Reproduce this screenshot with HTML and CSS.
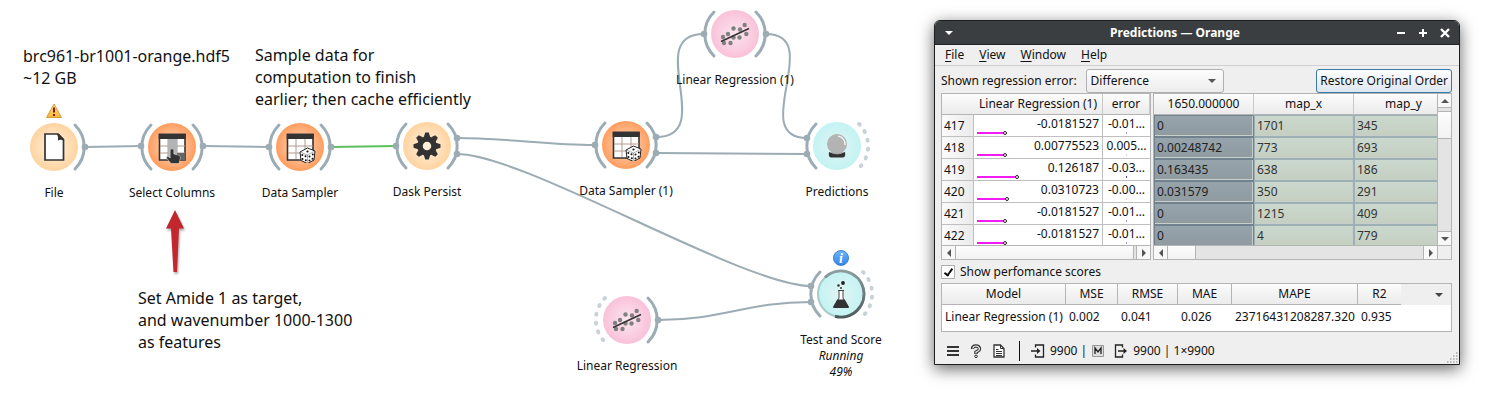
FILE: index.html
```html
<!DOCTYPE html>
<html lang="en">
<head>
<meta charset="utf-8">
<title>Predictions — Orange</title>
<link rel="stylesheet" href="styles.css">
</head>
<body>
<svg class="defs" aria-hidden="true">
  <defs>
    <radialGradient id="g-data"><stop offset="0" stop-color="#fff3e2"/><stop offset="1" stop-color="#ffd39f"/></radialGradient>
    <radialGradient id="g-transform"><stop offset="0" stop-color="#ffdcc6"/><stop offset="1" stop-color="#ff9d5e"/></radialGradient>
    <radialGradient id="g-model"><stop offset="0" stop-color="#fbe6ef"/><stop offset="1" stop-color="#fac1d9"/></radialGradient>
    <radialGradient id="g-evaluate"><stop offset="0" stop-color="#e2f4f3"/><stop offset="1" stop-color="#c3f3f3"/></radialGradient>
    <linearGradient id="g-warn" x2="0" y2="1"><stop offset="0" stop-color="#ffe38a"/><stop offset="1" stop-color="#f5b53a"/></linearGradient>
    <linearGradient id="g-info" x2="0" y2="1"><stop offset="0" stop-color="#6db5fa"/><stop offset="1" stop-color="#2f86ea"/></linearGradient>
    <linearGradient id="g-progress" x2="0" y2="1"><stop offset="0" stop-color="#8b9d9f"/><stop offset="1" stop-color="#4e5b5d"/></linearGradient>
    <symbol id="arc-in" viewBox="-40 -32 80 64"><path class="arc" d="M-21-22A31 31 0 0 0-21 22"/></symbol>
    <symbol id="arc-out" viewBox="-40 -32 80 64"><path class="arc" d="M21-22A31 31 0 0 1 21 22"/></symbol>
    <symbol id="arc-in-off" viewBox="-40 -32 80 64"><path class="arc arc-off" d="M-22-22A31 31 0 0 0-22 22"/></symbol>
    <symbol id="arc-out-off" viewBox="-40 -32 80 64"><path class="arc arc-off" d="M22-22A31 31 0 0 1 22 22"/></symbol>
    <symbol id="i-table" viewBox="-16 -16 32 32">
      <path fill="#fff" stroke="#333" stroke-width="1.6" d="M-12.5-12.5h25.500v25.500h-25.500z"/>
      <path fill="none" stroke="#b49a8e" d="M-12-1h25M-12 6h25M-4-8v20M5-8v20"/>
      <path fill="#333" d="M-13.300-13.300h27v5.300h-27z"/>
    </symbol>
    <symbol id="i-dice" viewBox="-16 -16 32 32">
      <path fill="#fff" stroke="#222" stroke-width="1" stroke-linejoin="round" d="M0 5L7.500 1l7.500 3-1 9-6.500 3.500L1 13.500z"/>
      <path fill="none" stroke="#777" stroke-width=".6" d="M0 5l7.500 3L15 4M7.500 8v8"/>
      <g fill="#111"><circle cx="7.500" cy="4.500" r="1.100"/><circle cx="2.300" cy="8" r="1"/><circle cx="5.500" cy="9.300" r="1"/><circle cx="2.500" cy="12" r="1"/><circle cx="5.800" cy="13.300" r="1"/><circle cx="9.500" cy="9.500" r="1"/><circle cx="12.800" cy="7.500" r="1"/><circle cx="9.500" cy="13.500" r="1"/><circle cx="12.500" cy="11.800" r="1"/></g>
    </symbol>
    <symbol id="i-scatter" viewBox="-16 -16 32 32">
      <g fill="#808080"><circle cx="-12" cy="3" r="2.200"/><circle cx="-11" cy="9" r="2.200"/><circle cx="-7" cy="0" r="2.200"/><circle cx="-4.500" cy="9" r="2.200"/><circle cx="-1.500" cy="-5.500" r="2.200"/><circle cx="-1.500" cy="3.500" r="2.200"/><circle cx="5" cy="-4.500" r="2.200"/><circle cx="4.500" cy="3.500" r="2.200"/><circle cx="9.700" cy="-9" r="2.200"/><circle cx="11.300" cy="0" r="2.200"/></g>
      <path stroke="#333" stroke-width="1.500" d="M-14 7.500L14-5.500"/>
    </symbol>
  </defs>
</svg>
<main class="desktop">
  <section class="canvas" aria-label="Workflow">
    <svg class="links" viewBox="0 0 934 407" aria-hidden="true">
      <path d="M85 147L142 146"/>
      <path d="M203 146L269 147"/>
      <path class="active" d="M331 147L396 146"/>
      <path d="M457 138C503 138 549 145 595 145"/>
      <path d="M457 154C525 154 743 286 811 286"/>
      <path d="M656 137C718 137 642 34 704 34"/>
      <path d="M766 34C826 34 747 138 807 138"/>
      <path d="M656 153L807 154"/>
      <path d="M658 320C723 320 746 302 811 302"/>
    </svg>
    <p class="note note-file">brc961-br1001-orange.hdf5<br>~12 GB</p>
    <p class="note note-sample">Sample data for<br>computation to finish<br>earlier; then cache efficiently</p>
    <p class="note note-target">Set Amide 1 as target,<br>and wavenumber 1000-1300<br>as features</p>
    <svg class="arrow" viewBox="0 0 24 68" aria-hidden="true"><path fill="#c1272d" d="M11 2l9 18.500h-5L13 64H9.500L7 20.500H2z"/></svg>

    <div class="node node-file">
      <svg class="shape" viewBox="-40 -32 80 64">
        <circle r="24" fill="url(#g-data)"/>
        <use href="#arc-out" x="-40" y="-32" width="80" height="64"/>
        <circle class="port" cx="31" r="3.300"/>
        <path fill="#fff" stroke="#333" stroke-width="1.700" d="M-9-13H4l5.500 5.500V13H-9z"/><path fill="#333" d="M3-13h2l5 5v2q-3-2-6-.5.500-3.500-1-6.500z"/>
        <path fill="url(#g-warn)" stroke="#d99b3c" stroke-linejoin="round" d="M0-43L7.500-29.500h-15z"/><path stroke="#8c1616" stroke-width="2" d="M0-39.500v5M0-33v2"/>
      </svg>
      <span class="label">File</span>
    </div>
    <div class="node node-select">
      <svg class="shape" viewBox="-40 -32 80 64">
        <circle r="24" fill="url(#g-transform)"/>
        <use href="#arc-in" x="-40" y="-32" width="80" height="64"/><use href="#arc-out" x="-40" y="-32" width="80" height="64"/>
        <circle class="port" cx="-31" cy="-1" r="3.300"/><circle class="port" cx="31" cy="-1" r="3.300"/>
        <use href="#i-table" x="-16" y="-16" width="32" height="32"/>
        <path fill="#b3b3b3" d="M-4-8h9v21h-9z"/><path fill="#666" d="M5 6h8v7H5z"/>
        <path fill="#333" stroke="#fff" stroke-width=".4" d="M-1.800 3q1.800-2.600 3.600 0v4l5.200 1.200q1.500.500 1.300 3L7 16.500H-1L-5.500 11q-.5-2 1.500-1.500l2.200 1.500z"/>
      </svg>
      <span class="label">Select Columns</span>
    </div>
    <div class="node node-sampler">
      <svg class="shape" viewBox="-40 -32 80 64">
        <circle r="24" fill="url(#g-transform)"/>
        <use href="#arc-in" x="-40" y="-32" width="80" height="64"/><use href="#arc-out" x="-40" y="-32" width="80" height="64"/>
        <circle class="port" cx="-31" r="3.300"/><circle class="port" cx="31" r="3.300"/>
        <use href="#i-table" x="-16" y="-16" width="32" height="32"/><use href="#i-dice" x="-16" y="-16" width="32" height="32"/>
      </svg>
      <span class="label">Data Sampler</span>
    </div>
    <div class="node node-dask">
      <svg class="shape" viewBox="-40 -32 80 64">
        <circle r="24" fill="url(#g-data)"/>
        <use href="#arc-in" x="-40" y="-32" width="80" height="64"/><use href="#arc-out" x="-40" y="-32" width="80" height="64"/>
        <circle class="port" cx="-31" r="3.300"/><circle class="port" cx="30" cy="-8" r="3.300"/><circle class="port" cx="30" cy="8" r="3.300"/>
        <circle r="7" fill="none" stroke="#333" stroke-width="5.500"/>
        <g fill="#333"><path id="tooth" d="M-3.200-9l1.400-4.500h3.600L3.200-9z"/><use href="#tooth" transform="rotate(45)"/><use href="#tooth" transform="rotate(90)"/><use href="#tooth" transform="rotate(135)"/><use href="#tooth" transform="rotate(180)"/><use href="#tooth" transform="rotate(225)"/><use href="#tooth" transform="rotate(270)"/><use href="#tooth" transform="rotate(315)"/></g>
      </svg>
      <span class="label">Dask Persist</span>
    </div>
    <div class="node node-sampler1">
      <svg class="shape" viewBox="-40 -32 80 64">
        <circle r="24" fill="url(#g-transform)"/>
        <use href="#arc-in" x="-40" y="-32" width="80" height="64"/><use href="#arc-out" x="-40" y="-32" width="80" height="64"/>
        <circle class="port" cx="-31" r="3.300"/><circle class="port" cx="30" cy="-8" r="3.300"/><circle class="port" cx="30" cy="8" r="3.300"/>
        <use href="#i-table" x="-16" y="-16" width="32" height="32"/><use href="#i-dice" x="-16" y="-16" width="32" height="32"/>
      </svg>
      <span class="label">Data Sampler (1)</span>
    </div>
    <div class="node node-linreg1">
      <svg class="shape" viewBox="-40 -32 80 64">
        <circle r="24" fill="url(#g-model)"/>
        <use href="#arc-in" x="-40" y="-32" width="80" height="64"/><use href="#arc-out" x="-40" y="-32" width="80" height="64"/>
        <circle class="port" cx="-31" r="3.300"/><circle class="port" cx="31" r="3.300"/>
        <use href="#i-scatter" x="-16" y="-16" width="32" height="32"/>
      </svg>
      <span class="label">Linear Regression (1)</span>
    </div>
    <div class="node node-predictions">
      <svg class="shape" viewBox="-40 -32 80 64">
        <circle r="24" fill="url(#g-evaluate)"/>
        <use href="#arc-in" x="-40" y="-32" width="80" height="64"/><use href="#arc-out-off" x="-40" y="-32" width="80" height="64"/>
        <circle class="port" cx="-30" cy="-8" r="3.300"/><circle class="port" cx="-30" cy="8" r="3.300"/>
        <path fill="#333" d="M-8 6q8 4 16 0 1 5-2 5.500H-6q-3-.5-2-5.500z"/>
        <circle cy="-2" r="10" fill="#b3b3b3"/><path fill="none" stroke="#fff" stroke-width="1.200" d="M1-10A8 8 0 0 1 8-1"/><path fill="none" stroke="#999" stroke-width=".8" d="M-6 6Q0 10 6 6"/>
      </svg>
      <span class="label">Predictions</span>
    </div>
    <div class="node node-score">
      <svg class="shape" viewBox="-40 -32 80 64">
        <circle r="23" fill="url(#g-evaluate)"/>
        <use href="#arc-in" x="-40" y="-32" width="80" height="64"/><use href="#arc-out-off" x="-40" y="-32" width="80" height="64"/>
        <circle class="port" cx="-30" cy="-8" r="3.300"/><circle class="port" cx="-30" cy="8" r="3.300"/>
        <circle r="23" fill="none" stroke="#a9c9ca" stroke-width="2"/>
        <path fill="none" stroke="url(#g-progress)" stroke-width="3" d="M-16-16.500A23 23 0 1 1-6 22.200"/>
        <path fill="#fff" stroke="#444" stroke-width="1" d="M-3-3.500h6M-2-3v7L-7 13H7L2 4v-7"/>
        <path fill="#333" d="M-3.800 5.500h7.600L8 13q0 1-1 1H-7q-1 0-1-1z"/><circle cx="2" cy="-11" r="1.900" fill="#222"/><circle cx="-2.500" cy="-8.500" r="1.300" fill="#333"/><circle cx="0" cy="-6" r="1" fill="#333"/>
        <circle cy="-36" r="7.500" fill="url(#g-info)" stroke="#3d83d3"/><text class="info" y="-31" text-anchor="middle">i</text>
      </svg>
      <span class="label">Test and Score<em>Running</em><em>49%</em></span>
    </div>
    <div class="node node-linreg">
      <svg class="shape" viewBox="-40 -32 80 64">
        <circle r="24" fill="url(#g-model)"/>
        <use href="#arc-in-off" x="-40" y="-32" width="80" height="64"/><use href="#arc-out" x="-40" y="-32" width="80" height="64"/>
        <circle class="port" cx="31" r="3.300"/>
        <use href="#i-scatter" x="-16" y="-16" width="32" height="32"/>
      </svg>
      <span class="label">Linear Regression</span>
    </div>
  </section>

  <section class="window" aria-label="Predictions">
    <header class="titlebar">
      <button class="tb" aria-label="Window menu"><svg width="10" height="10"><path fill="#fff" d="M1 3h8L5 7z"/></svg></button>
      <h1>Predictions — Orange</h1>
      <div class="tb-group">
        <button class="tb" aria-label="Minimize"><svg width="10" height="10"><path stroke="#fff" stroke-width="2" d="M1 5h8"/></svg></button>
        <button class="tb" aria-label="Maximize"><svg width="10" height="10"><path stroke="#fff" stroke-width="2" d="M1 5h8M5 1v8"/></svg></button>
        <button class="tb" aria-label="Close"><svg width="10" height="10"><path stroke="#fff" stroke-width="2.400" d="M1 1l8 8M9 1L1 9"/></svg></button>
      </div>
    </header>
    <nav class="menubar">
      <button><u>F</u>ile</button><button><u>V</u>iew</button><button><u>W</u>indow</button><button><u>H</u>elp</button>
    </nav>
    <div class="content">
      <div class="controls">
        <label for="err">Shown regression error:</label>
        <span class="combo"><select id="err"><option>Difference</option></select><svg width="8" height="4"><path fill="#555" d="M0 0h8L4 4z"/></svg></span>
        <button class="restore">Restore Original Order</button>
      </div>
      <div class="split">
        <div class="pane">
          <div class="view">
            <table class="grid predictions">
              <colgroup><col class="c-num"><col class="c-pred"><col class="c-err"></colgroup>
              <thead><tr><td></td><th class="right">Linear Regression (1)</th><th>error</th></tr></thead>
              <tbody>
                <tr><th>417</th><td>-0.0181527<i class="bar"></i></td><td>-0.01…<i class="tick"></i></td></tr>
                <tr><th>418</th><td>0.00775523<i class="bar"></i></td><td>0.005…<i class="tick faint"></i></td></tr>
                <tr><th>419</th><td>0.126187<i class="bar long"></i></td><td>-0.03…<i class="tick strong"></i></td></tr>
                <tr><th>420</th><td>0.0310723<i class="bar mid"></i></td><td>-0.00…<i class="tick faint"></i></td></tr>
                <tr><th>421</th><td>-0.0181527<i class="bar"></i></td><td>-0.01…<i class="tick"></i></td></tr>
                <tr><th>422</th><td>-0.0181527<i class="bar"></i></td><td>-0.01…<i class="tick"></i></td></tr>
              </tbody>
            </table>
          </div>
          <div class="hscroll"><span class="step"><svg width="4" height="8"><path fill="#555" d="M4 0v8L0 4z"/></svg></span><span class="thumb wide"></span><span class="step"><svg width="4" height="8"><path fill="#555" d="M0 0v8l4-4z"/></svg></span></div>
        </div>
        <div class="pane with-v">
          <div class="view">
            <table class="grid data">
              <colgroup><col><col><col></colgroup>
              <thead><tr><th>1650.000000</th><th>map_x</th><th>map_y</th></tr></thead>
              <tbody>
                <tr><td>0</td><td>1701</td><td>345</td></tr>
                <tr><td>0.00248742</td><td>773</td><td>693</td></tr>
                <tr><td>0.163435</td><td>638</td><td>186</td></tr>
                <tr><td>0.031579</td><td>350</td><td>291</td></tr>
                <tr><td>0</td><td>1215</td><td>409</td></tr>
                <tr><td>0</td><td>4</td><td>779</td></tr>
              </tbody>
            </table>
          </div>
          <div class="vscroll"><span class="step"><svg width="8" height="4"><path fill="#555" d="M0 4h8L4 0z"/></svg></span><span class="thumb"></span><span class="step"><svg width="8" height="4"><path fill="#555" d="M0 0h8L4 4z"/></svg></span></div>
          <div class="hscroll"><span class="step"><svg width="4" height="8"><path fill="#555" d="M4 0v8L0 4z"/></svg></span><span class="thumb"></span><span class="step"><svg width="4" height="8"><path fill="#555" d="M0 0v8l4-4z"/></svg></span></div>
          <div class="corner"></div>
        </div>
      </div>
      <label class="check"><input type="checkbox" checked>Show perfomance scores</label>
      <div class="scores">
        <table>
          <colgroup><col class="s-model"><col class="s-mse"><col class="s-rmse"><col class="s-mae"><col class="s-mape"><col class="s-r2"><col></colgroup>
          <thead><tr><th>Model</th><th>MSE</th><th>RMSE</th><th>MAE</th><th>MAPE</th><th>R2</th><td><svg width="8" height="4"><path fill="#444" d="M0 0h8L4 4z"/></svg></td></tr></thead>
          <tbody><tr><td>Linear Regression (1)</td><td>0.002</td><td>0.041</td><td>0.026</td><td>23716431208287.320</td><td>0.935</td><td></td></tr></tbody>
        </table>
      </div>
    </div>
    <footer class="status">
      <button aria-label="Menu"><svg width="12" height="12"><path stroke="#333" stroke-width="2" d="M0 2h12M0 6h12M0 10h12"/></svg></button>
      <button aria-label="Help"><svg width="12" height="14"><path fill="none" stroke="#333" stroke-width="3.400" d="M2.500 5Q2.500 2 6 2t3.500 3Q9.500 6.500 6 8v2"/><path fill="none" stroke="#eee" stroke-width="1.200" d="M2.800 4.500Q3 2 6 2t3.500 3Q9.500 6.500 6 8v1.500"/><circle cx="6" cy="12.300" r="1.300" fill="#eee" stroke="#333"/></svg></button>
      <button aria-label="Report"><svg width="12" height="14"><path fill="#fff" stroke="#333" stroke-width="1.300" d="M1 1h6.500L11 4.500V13H1z"/><path fill="none" stroke="#333" d="M7.500 1v3.500H11M3 5.500h2.500M3 7.500h6M3 9.500h6M3 11.500h6"/></svg></button>
      <span class="divider"></span>
      <svg width="14" height="14"><path fill="none" stroke="#222" stroke-width="1.300" d="M4.500 3.500V1h8v12h-8v-2.500M0 7h7.500"/><path fill="#222" d="M6 4l3.500 3L6 10z"/></svg>
      <span class="in">9900 |</span>
      <svg width="12" height="12"><path fill="#ddd" stroke="#999" d="M.500.500h11v11H.500z"/><path fill="none" stroke="#222" stroke-width="1.300" d="M3 9V3l3 4 3-4v6"/></svg>
      <svg class="out-icon" width="14" height="14"><path fill="none" stroke="#222" stroke-width="1.300" d="M8.500 3.500V1h-7v12h7v-2.500M4 7h7"/><path fill="#222" d="M9.500 4L13 7l-3.500 3z"/></svg>
      <span>9900 | 1×9900</span>
      <svg class="grip" width="12" height="12"><path stroke="#aaa" stroke-width="1.500" stroke-dasharray="1.500 1.500" d="M9 1h2M6 4h5M3 7h8M0 10h11"/></svg>
    </footer>
  </section>
</main>
</body>
</html>
```
FILE: styles.css
```css
*, *::before, *::after { box-sizing: border-box; }
body {
  margin: 0;
  background: #fff;
  color: #111;
  font: 12px/16px "Noto Sans", sans-serif;
}
button, select, input { font: inherit; color: inherit; margin: 0; }
button { border: 0; padding: 0; background: none; }
svg { display: block; }
.defs { position: absolute; width: 0; height: 0; }
.desktop { display: flex; align-items: flex-start; min-height: 100vh; overflow: hidden; }

/* Workflow canvas */
.canvas { position: relative; flex: none; width: 934px; min-height: 407px; }
.links { position: absolute; inset: 0; width: 934px; }
.links path { fill: none; stroke: #9cacb4; stroke-width: 2; }
.links .active { stroke: #5cc05c; }
.arc { fill: none; stroke: #9cacb4; stroke-width: 3; stroke-linecap: round; }
.arc-off { stroke: #c9d3d7; stroke-width: 4; stroke-dasharray: 1 8; }
.port { fill: #9cacb4; }
.note { position: absolute; margin: 0; font-size: 16px; line-height: 22px; white-space: nowrap; }
.note-file { left: 23px; top: 45px; }
.note-sample { left: 255px; top: 44px; }
.note-target { left: 138px; top: 287px; }
.arrow { position: absolute; left: 164px; top: 208px; width: 24px; filter: drop-shadow(1px 2px 1px #0005); }
.node { position: absolute; display: flex; flex-direction: column; align-items: center; gap: 6px; width: 140px; }
.shape { width: 80px; height: 64px; overflow: visible; }
.shape use { overflow: visible; }
.label { text-align: center; white-space: nowrap; }
.label em { display: block; }
.info { font: italic bold 14px "Liberation Serif", serif; fill: #fff; }
.node-file { left: -16px; top: 115px; }
.node-select { left: 102px; top: 115px; }
.node-sampler { left: 230px; top: 115px; }
.node-dask { left: 357px; top: 114px; }
.node-sampler1 { left: 556px; top: 113px; }
.node-linreg1 { left: 665px; top: 2px; }
.node-predictions { left: 767px; top: 114px; }
.node-score { left: 771px; top: 262px; }
.node-linreg { left: 557px; top: 288px; }

/* Window */
.window {
  flex: 1;
  min-width: 480px;
  margin: 20px 31px 40px 0;
  border: 1px solid #1c1e1f;
  border-radius: 6px 6px 0 0;
  background: #efefef;
  box-shadow: 0 4px 16px #0009;
}
.titlebar { display: flex; align-items: center; height: 24px; padding: 0 9px; background: #3b3e40; border-bottom: 1px solid #232526; border-radius: 5px 5px 0 0; color: #fff; }
.titlebar h1 { flex: 1; margin: 0; text-align: center; font-size: 12px; line-height: 16px; }
.tb-group { display: flex; gap: 12px; }
.menubar { display: flex; gap: 15px; height: 21px; padding: 0 10px; border-bottom: 1px solid #d0d0d0; }
.menubar u { text-underline-offset: 2px; }
.content { padding: 2px 7px 0 6px; }
.controls { display: flex; align-items: center; height: 25px; }
.combo { position: relative; width: 138px; margin-left: 9px; }
.combo svg { position: absolute; right: 8px; top: 10px; }
.combo select { appearance: none; width: 100%; height: 24px; padding: 0 4px; border: 1px solid #b0b0b0; border-radius: 3px; background: linear-gradient(#fdfdfd, #ececec); }
.restore { height: 24px; margin-left: auto; padding: 0 3px; border: 1px solid #3778a4; border-radius: 3px; background: linear-gradient(#fcfdfe, #dfe6ee); white-space: nowrap; }
.split { display: grid; grid-template-columns: 210px minmax(0, 1fr); gap: 2px; }
.pane { display: grid; grid-template-columns: minmax(0, 1fr); grid-template-rows: 151px 14px; border: 1px solid #b4b4b4; background: #fff; }
.with-v { grid-template-columns: minmax(0, 1fr) 14px; }
.view { overflow: hidden; }
table { border-collapse: separate; border-spacing: 0; table-layout: fixed; }
.grid { width: 100%; }
.grid th, .grid td { height: 22px; padding: 0; font-weight: 400; white-space: nowrap; border: 0 solid #bfbfbf; border-width: 0 1px 1px 0; }
.grid thead th, .grid thead td { height: 21px; text-align: center; background: linear-gradient(#fcfcfc, #ebebeb); border-color: #b4b4b4 #c9c9c9; }
.grid thead .right { text-align: right; padding-right: 5px; }
.grid thead td:first-child { border-right: 0; }
.c-num { width: 32px; }
.c-pred { width: 129px; }
.predictions tbody th { text-align: left; padding-left: 2px; background: linear-gradient(90deg, #fbfbfb, #ebebeb); }
.predictions tbody td { position: relative; padding: 0 3px 3px 0; text-align: right; line-height: 16px; }
.predictions tbody td:last-child { text-align: center; padding-right: 0; border-right: 0; }
.bar { position: absolute; left: 3px; bottom: 2px; width: 27px; height: 2px; background: #f21cf2; }
.bar::after { content: ""; position: absolute; right: -3px; top: -1px; width: 4px; height: 4px; border: 1px solid #222; border-radius: 2px; background: #fff; }
.bar.mid { width: 29px; }
.bar.long { width: 39px; }
.tick { position: absolute; left: 23px; bottom: 2px; width: 1px; height: 2px; background: #9a9ae6; }
.tick.faint { background: #ddd; }
.tick.strong { background: #3a3ad0; }
.data { width: 300px; }
.data tbody td { padding-left: 2px; color: #333; border: 1px solid #9db0b6; background: linear-gradient(#cbd8ce, #c4cfc1); box-shadow: inset -1px -1px #c8cfca; }
.data tbody td:first-child { border-color: #71828e; background: linear-gradient(#96a4ab, #8f9aa1); color: #222; }
.vscroll, .hscroll { display: flex; background: #e4e4e4; }
.vscroll { flex-direction: column; border-left: 1px solid #b4b4b4; }
.hscroll { border-top: 1px solid #b4b4b4; }
.step { display: flex; flex: none; align-items: center; justify-content: center; width: 14px; height: 13px; background: #f8f8f8; border: 0 solid #b4b4b4; }
.hscroll .step:first-child { border-right-width: 1px; }
.hscroll .step:last-child { margin-left: auto; border-left-width: 1px; }
.vscroll .step { width: 13px; height: 14px; }
.vscroll .step:first-child { border-bottom-width: 1px; }
.vscroll .step:last-child { margin-top: auto; border-top-width: 1px; }
.thumb { background: linear-gradient(#fdfdfd, #f2f2f2); border: 0 solid #b4b4b4; }
.vscroll .thumb { height: 28px; margin-top: 3px; border-width: 1px 0; }
.hscroll .thumb { width: 28px; border-right-width: 1px; }
.hscroll .wide { flex: 1; width: auto; margin-right: 2px; }
.corner { background: #efefef; border: 0 solid #b4b4b4; border-width: 1px 0 0 1px; }
.check { display: flex; align-items: center; gap: 5px; width: max-content; height: 23px; }
.check input { appearance: none; position: relative; width: 14px; height: 14px; border: 1px solid #b0b0b0; background: #fff; }
.check input:checked::after { content: ""; position: absolute; left: 4px; top: 1px; width: 5px; height: 9px; border: solid #111; border-width: 0 2px 2px 0; transform: rotate(35deg); }
.scores { min-height: 49px; border: 1px solid #b4b4b4; background: #fff; }
.scores table { width: 100%; }
.scores th, .scores td { height: 24px; padding: 0 0 0 3px; font-weight: 400; text-align: left; white-space: nowrap; }
.scores thead th { height: 21px; padding: 0; text-align: center; background: linear-gradient(#fcfcfc, #ebebeb); border: 0 solid #b4b4b4; border-width: 0 1px 1px 0; }
.scores thead th:nth-child(6) { border-right: 0; }
.scores thead td { height: 21px; background: #efefef; }
.scores thead svg { margin: 0 8px 0 auto; }
.s-model { width: 124px; }
.s-mse { width: 52px; }
.s-rmse { width: 60px; }
.s-mae { width: 54px; }
.s-mape { width: 126px; }
.s-r2 { width: 43px; }
.status { display: flex; align-items: center; height: 32px; padding: 6px 0 0 12px; gap: 5px; }
.status button { margin-right: 6px; }
.divider { width: 1px; height: 20px; margin: 0 6px 0 3px; background: #111; }
.out-icon { margin-left: 5px; }
.grip { align-self: flex-end; margin-left: auto; }
```
